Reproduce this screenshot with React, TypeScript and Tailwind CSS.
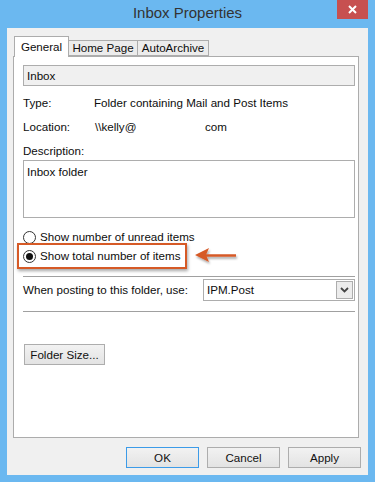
import React from "react";

const F = { fontFamily: '"Liberation Sans", Arial, sans-serif' };

function Radio({ checked }: { checked?: boolean }) {
  return (
    <span className="w-[13px] h-[13px] rounded-full border border-[#333] bg-white flex items-center justify-center shrink-0">
      {checked && <span className="w-[7px] h-[7px] rounded-full bg-[#111]" />}
    </span>
  );
}

function Btn({ children, primary, className = "" }: { children: React.ReactNode; primary?: boolean; className?: string }) {
  return (
    <div
      className={`h-[21px] flex items-center justify-center text-[11.6px] text-[#111] bg-gradient-to-b from-[#f2f2f2] to-[#e3e3e3] border ${
        primary ? "border-[#3c9be8]" : "border-[#adadad]"
      } ${className}`}
    >
      {children}
    </div>
  );
}

export default function App() {
  return (
    <div className="w-[375px] h-[482px] bg-[#6bb8f0] flex flex-col overflow-hidden text-[#0d0d0d]" style={F}>
      {/* title bar */}
      <div className="relative h-[28px] shrink-0 flex items-center justify-center">
        <span className="text-[15px] text-[#333] -mt-[1px]">Inbox Properties</span>
        <div className="absolute right-[7px] top-0 w-[31px] h-[19px] bg-[#c75050] flex items-center justify-center">
          <svg width="9" height="9" viewBox="0 0 9 9">
            <path d="M1 1L8 8M8 1L1 8" stroke="white" strokeWidth="2" />
          </svg>
        </div>
      </div>

      {/* body */}
      <div className="mx-[7px] h-[447px] bg-[#f0f0f0] flex flex-col">
        {/* tabs */}
        <div className="flex items-end mt-[8px] ml-[7px] h-[21px] relative z-10 text-[11.6px]">
          <div className="h-[21px] w-[55px] bg-white border border-b-0 border-[#acacac] flex items-center justify-center pb-[1px]">
            General
          </div>
          <div className="h-[16px] w-[69px] bg-[#ececec] border border-l-0 border-[#acacac] flex items-center justify-center mb-[1px]">
            Home Page
          </div>
          <div className="h-[16px] w-[71px] bg-[#ececec] border border-l-0 border-[#acacac] flex items-center justify-center mb-[1px]">
            AutoArchive
          </div>
        </div>

        {/* panel */}
        <div className="ml-[6px] mr-[9px] -mt-[1px] h-[382px] bg-white border border-[#acacac] flex flex-col pl-[9px] text-[11.6px]">
          <div className="mt-[8px] h-[21px] w-[332px] bg-[#f0f0f0] border border-[#adadad] flex items-center pl-[3px]">
            Inbox
          </div>
          <div className="h-[34px] flex items-center">
            <span className="w-[71px]">Type:</span>
            <span>Folder containing Mail and Post Items</span>
          </div>
          <div className="h-[14px] flex items-center">
            <span className="w-[72px]">Location:</span>
            <span className="w-[110px]">\\kelly@</span>
            <span>com</span>
          </div>
          <div className="mt-[9px] h-[16px] flex items-center">Description:</div>
          <div className="mt-[1px] h-[58px] w-[332px] border border-[#adadad] pl-[3px] pt-[2px]">Inbox folder</div>

          <div className="mt-[10px] h-[18px] flex items-center gap-[4px]">
            <Radio />
            <span>Show number of unread items</span>
          </div>
          <div className="relative mt-[1px] h-[18px] flex items-center gap-[4px]">
            <Radio checked />
            <span>Show total number of items</span>
            <div className="absolute left-[-6px] top-[-4px] w-[170px] h-[26px] border-2 border-[#d65a26] shadow-[1px_2px_3px_rgba(0,0,0,0.35)]" />
            <svg className="absolute left-[167px] top-[-3px]" width="50" height="22" viewBox="0 0 50 22">
              <defs>
                <filter id="sh" x="-20%" y="-50%" width="140%" height="200%">
                  <feDropShadow dx="1" dy="2" stdDeviation="1.2" floodColor="#000" floodOpacity="0.35" />
                </filter>
              </defs>
              <g filter="url(#sh)">
                <path d="M14 11.5 L46 11.5" stroke="#d65a26" strokeWidth="2.5" />
                <path d="M5 11 L19 4 L16 11 L19 18 Z" fill="#d65a26" />
              </g>
            </svg>
          </div>

          <div className="mt-[11px] h-px w-[332px] bg-[#a0a0a0]" />

          <div className="mt-[2px] h-[22px] flex items-center">
            <span className="w-[180px]">When posting to this folder, use:</span>
            <div className="h-[22px] w-[152px] border border-[#adadad] bg-white flex items-center justify-between pl-[3px] pr-px">
              <span>IPM.Post</span>
              <div className="w-[17px] h-[18px] border border-[#adadad] bg-[#ececec] flex items-center justify-center">
                <svg width="9" height="6" viewBox="0 0 9 6">
                  <path d="M1 1L4.5 4.5L8 1" stroke="#444" strokeWidth="1.8" fill="none" />
                </svg>
              </div>
            </div>
          </div>

          <div className="mt-[10px] h-px w-[332px] bg-[#a0a0a0]" />

          <Btn className="mt-[32px] ml-px w-[81px]">Folder Size...</Btn>
        </div>

        {/* bottom buttons */}
        <div className="mt-[9px] mr-[7px] flex justify-end gap-[8px]">
          <Btn primary className="w-[73px]">OK</Btn>
          <Btn className="w-[73px]">Cancel</Btn>
          <Btn className="w-[73px]">Apply</Btn>
        </div>
      </div>
    </div>
  );
}
